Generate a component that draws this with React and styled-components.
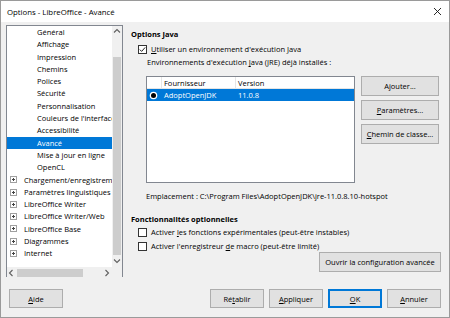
import React from 'react';
import styled, { createGlobalStyle } from 'styled-components';

const GlobalStyle = createGlobalStyle`
  html, body {
    margin: 0;
    padding: 0;
    background: #fff;
  }
  * {
    box-sizing: border-box;
  }
`;

const Window = styled.div`
  width: 450px;
  height: 318px;
  border: 1px solid #9a9a9a;
  background: #f0f0f0;
  font-family: "Segoe UI", "Open Sans", sans-serif;
  font-size: 7.5px;
  color: #000;
  display: flex;
  flex-direction: column;
  overflow: hidden;
`;

const TitleBar = styled.div`
  height: 21px;
  background: #fff;
  display: flex;
  align-items: center;
  justify-content: space-between;
  padding: 0 6px 0 6px;
  font-size: 7.8px;
`;

const CloseBtn = styled.span`
  display: flex;
  align-items: center;
  width: 12px;
  justify-content: center;
`;

const Main = styled.div`
  display: flex;
  gap: 8px;
  padding: 3px 0 0 5px;
  height: 255px;
`;

const TreePanel = styled.div`
  width: 117px;
  height: 252px;
  background: #fff;
  border: 1px solid #828790;
  display: grid;
  grid-template-columns: 1fr 10px;
  grid-template-rows: 1fr 12px;
`;

const TreeList = styled.div`
  overflow: hidden;
`;

const TreeItem = styled.div`
  height: 12.3px;
  line-height: 12.3px;
  display: flex;
  align-items: center;
  white-space: nowrap;
  padding-left: ${({ level }) => (level === 1 ? '30px' : '3px')};
  background: ${({ selected }) => (selected ? '#0078d7' : 'transparent')};
  color: ${({ selected }) => (selected ? '#fff' : '#000')};
`;

const Expander = styled.svg`
  width: 7px;
  height: 7px;
  margin-right: 7px;
  flex: none;
`;

const VScroll = styled.div`
  background: #f0f0f0;
  display: flex;
  flex-direction: column;
  align-items: center;
`;

const HScroll = styled.div`
  background: #f0f0f0;
  display: flex;
  align-items: center;
`;

const Arrow = styled.div`
  width: 10px;
  height: 12px;
  display: flex;
  align-items: center;
  justify-content: center;
  flex: none;
`;

const VThumb = styled.div`
  width: 8px;
  margin-top: ${({ top }) => top}px;
  height: ${({ size }) => size}px;
  background: #cdcdcd;
`;

const HThumb = styled.div`
  height: 8px;
  width: ${({ size }) => size}px;
  background: #cdcdcd;
`;

const Corner = styled.div`
  background: #f0f0f0;
`;

const Spacer = styled.div`
  flex: 1;
`;

const RightPanel = styled.div`
  width: 310px;
  display: flex;
  flex-direction: column;
`;

const Heading = styled.div`
  font-weight: 700;
  height: 12px;
  line-height: 12px;
  margin-top: ${({ mt }) => mt}px;
`;

const CheckRow = styled.label`
  display: flex;
  align-items: center;
  height: 12px;
  padding-left: 7px;
  margin-top: ${({ mt }) => mt || 0}px;
  gap: 4px;
  white-space: nowrap;
`;

const Box = styled.span`
  width: 9px;
  height: 9px;
  border: 1px solid #333;
  background: #fff;
  display: flex;
  align-items: center;
  justify-content: center;
  flex: none;
`;

const Text = styled.div`
  height: 12px;
  line-height: 12px;
  padding-left: ${({ pl }) => pl}px;
  margin-top: ${({ mt }) => mt || 0}px;
  white-space: nowrap;
`;

const U = styled.span`
  text-decoration: underline;
  text-underline-offset: 1px;
`;

const JreArea = styled.div`
  display: flex;
  gap: 6px;
  margin-top: 8px;
  padding-left: 15px;
`;

const Table = styled.div`
  width: 209px;
  height: 107px;
  background: #fff;
  border: 1px solid #828790;
`;

const TableRow = styled.div`
  display: flex;
  height: 12px;
  line-height: 12px;
  background: ${({ selected }) => (selected ? '#0078d7' : '#fff')};
  color: ${({ selected }) => (selected ? '#fff' : '#000')};
  border-bottom: ${({ header }) => (header ? '1px solid #e5e5e5' : 'none')};
`;

const Cell = styled.div`
  width: ${({ w }) => (w ? `${w}px` : 'auto')};
  flex: ${({ w }) => (w ? 'none' : '1')};
  padding-left: 2px;
  white-space: nowrap;
  overflow: hidden;
  border-right: ${({ header }) => (header ? '1px solid #e5e5e5' : 'none')};
  display: flex;
  align-items: center;
`;

const Radio = styled.span`
  width: 5px;
  height: 5px;
  border-radius: 50%;
  background: #000;
  box-shadow: 0 0 0 1.3px #fff;
  margin-left: 2px;
`;

const ButtonCol = styled.div`
  display: flex;
  flex-direction: column;
  gap: 4px;
`;

const Button = styled.button`
  font-family: inherit;
  font-size: 7.5px;
  color: #000;
  height: ${({ h }) => h || 20}px;
  width: ${({ w }) => w}px;
  background: #e1e1e1;
  border: 1px solid ${({ primary }) => (primary ? '#0078d7' : '#adadad')};
  box-shadow: ${({ primary }) => (primary ? 'inset 0 0 0 1px #0078d7' : 'none')};
  padding: 0;
  display: flex;
  align-items: center;
  justify-content: center;
  white-space: nowrap;
`;

const BottomRight = styled.div`
  display: flex;
  justify-content: flex-end;
`;

const Footer = styled.div`
  display: flex;
  align-items: center;
  gap: 5px;
  padding: 12px 8px 0 8px;
`;

const PlusBox = () => (
  <Expander viewBox="0 0 7 7">
    <rect x="0.5" y="0.5" width="6" height="6" fill="#fff" stroke="#a0a0a0" />
    <path d="M2 3.5h3M3.5 2v3" stroke="#444" strokeWidth="1" />
  </Expander>
);

const Chevron = ({ dir }) => {
  const paths = {
    up: 'M2 5.5l3-3 3 3',
    down: 'M2 3.5l3 3 3-3',
    left: 'M5.5 2l-3 3 3 3',
    right: 'M3.5 2l3 3-3 3',
  };
  return (
    <svg width="10" height="10" viewBox="0 0 10 10">
      <path d={paths[dir]} fill="none" stroke="#606060" strokeWidth="1.1" />
    </svg>
  );
};

const children = [
  'Général',
  'Affichage',
  'Impression',
  'Chemins',
  'Polices',
  'Sécurité',
  'Personnalisation',
  "Couleurs de l'interface",
  'Accessibilité',
  'Avancé',
  'Mise à jour en ligne',
  'OpenCL',
];

const groups = [
  'Chargement/enregistrement',
  'Paramètres linguistiques',
  'LibreOffice Writer',
  'LibreOffice Writer/Web',
  'LibreOffice Base',
  'Diagrammes',
  'Internet',
];

const CheckBox = ({ checked }) => (
  <Box>
    {checked && (
      <svg width="7" height="7" viewBox="0 0 7 7">
        <path d="M0.8 3.6l1.8 1.8 3.6-4" fill="none" stroke="#222" strokeWidth="1" />
      </svg>
    )}
  </Box>
);

const App = () => {
  return (
    <>
      <GlobalStyle />
      <Window>
        <TitleBar>
          <span>Options - LibreOffice - Avancé</span>
          <CloseBtn>
            <svg width="9" height="9" viewBox="0 0 9 9">
              <path d="M1 1l7 7M8 1l-7 7" stroke="#111" strokeWidth="0.9" />
            </svg>
          </CloseBtn>
        </TitleBar>
        <Main>
          <TreePanel>
            <TreeList>
              {children.map((c) => (
                <TreeItem key={c} level={1} selected={c === 'Avancé'}>
                  {c}
                </TreeItem>
              ))}
              {groups.map((g) => (
                <TreeItem key={g}>
                  <PlusBox />
                  {g}
                </TreeItem>
              ))}
            </TreeList>
            <VScroll>
              <Arrow><Chevron dir="up" /></Arrow>
              <VThumb top={19} size={198} />
              <Spacer />
              <Arrow><Chevron dir="down" /></Arrow>
            </VScroll>
            <HScroll>
              <Arrow><Chevron dir="left" /></Arrow>
              <HThumb size={66} />
              <Spacer />
              <Arrow><Chevron dir="right" /></Arrow>
            </HScroll>
            <Corner />
          </TreePanel>
          <RightPanel>
            <Heading mt={3}>Options Java</Heading>
            <CheckRow mt={3}>
              <CheckBox checked />
              <span><U>U</U>tiliser un environnement d'exécution Java</span>
            </CheckRow>
            <Text pl={16} mt={1}>
              Environnements d'exécution <U>J</U>ava (JRE) déjà installés :
            </Text>
            <JreArea>
              <Table>
                <TableRow header>
                  <Cell w={15} header />
                  <Cell w={74} header>Fournisseur</Cell>
                  <Cell>Version</Cell>
                </TableRow>
                <TableRow selected>
                  <Cell w={15}><Radio /></Cell>
                  <Cell w={74}>AdoptOpenJDK</Cell>
                  <Cell>11.0.8</Cell>
                </TableRow>
              </Table>
              <ButtonCol>
                <Button w={78}>A<U>j</U>outer...</Button>
                <Button w={78}><U>P</U>aramètres...</Button>
                <Button w={78}><U>C</U>hemin de classe...</Button>
              </ButtonCol>
            </JreArea>
            <Text pl={15} mt={7}>
              Emplacement : C:\Program Files\AdoptOpenJDK\jre-11.0.8.10-hotspot
            </Text>
            <Heading mt={11}>Fonctionnalités optionnelles</Heading>
            <CheckRow mt={1}>
              <CheckBox />
              <span>Activer <U>l</U>es fonctions expérimentales (peut-être instables)</span>
            </CheckRow>
            <CheckRow mt={2}>
              <CheckBox />
              <span>Activer l'enregistreur <U>d</U>e macro (peut-être limité)</span>
            </CheckRow>
            <BottomRight>
              <Button w={122}>Ouvrir la confi<U>g</U>uration avancée</Button>
            </BottomRight>
          </RightPanel>
        </Main>
        <Footer>
          <Button w={54} h={19}><U>A</U>ide</Button>
          <Spacer />
          <Button w={54} h={19}>Ré<U>t</U>ablir</Button>
          <Button w={54} h={19}><U>A</U>ppliquer</Button>
          <Button w={54} h={19} primary><U>O</U>K</Button>
          <Button w={54} h={19}><U>A</U>nnuler</Button>
        </Footer>
      </Window>
    </>
  );
};

export default App;
